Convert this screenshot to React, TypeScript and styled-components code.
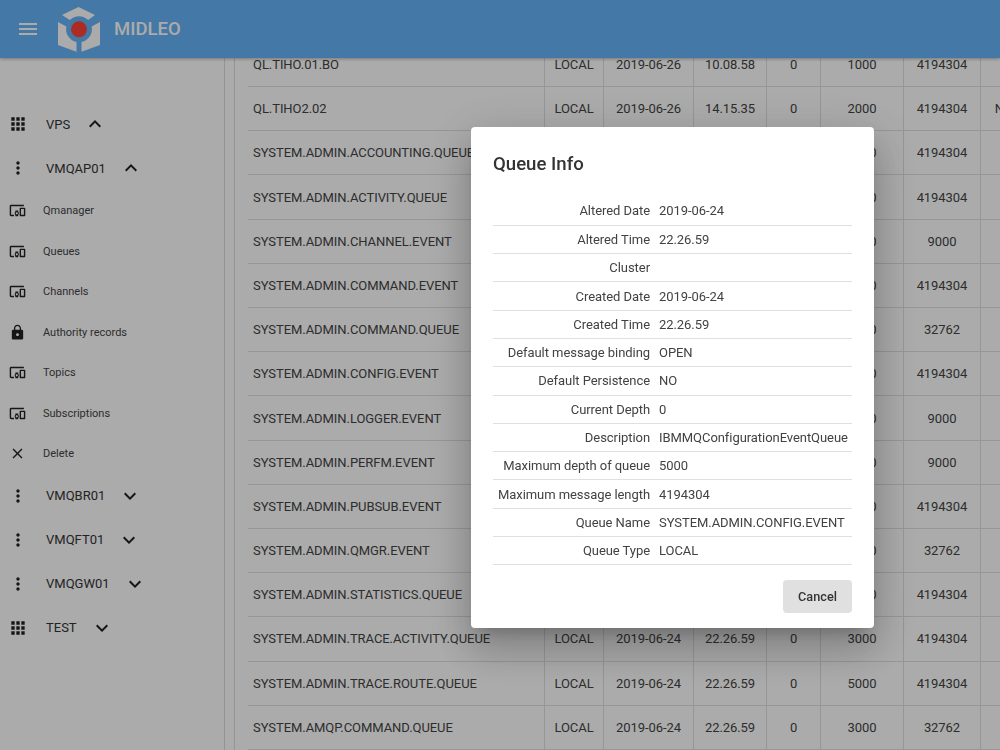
import React from 'react'
import styled, { createGlobalStyle } from 'styled-components'
import { MdApps, MdClose, MdDevicesOther, MdExpandLess, MdExpandMore, MdLock, MdMenu, MdMoreVert } from 'react-icons/md'

const GlobalStyle = createGlobalStyle`
html, body {
  margin: 0;
  height: 100%;
  overflow: hidden;
  background: #fff;
  font-family: Roboto, "Liberation Sans", sans-serif;
}
`

const Page = styled.div`
display: flex;
flex-direction: column;
height: 750px;
overflow: hidden;
`

const Header = styled.header`
flex: 0 0 58px;
display: flex;
align-items: center;
background: #66b3f8;
color: #fff;
box-shadow: 0 1px 3px rgba(0, 0, 0, 0.3);
z-index: 2;
`

const MenuButton = styled.div`
display: flex;
width: 56px;
margin-right: 2px;
justify-content: center;
font-size: 24px;
`

const Brand = styled.div`
margin-left: 14px;
font-size: 18.5px;
font-weight: 500;
`

const LogoMark = styled.svg`
flex: none;
width: 42px;
height: 45px;
margin-top: 1px;
`

const Body = styled.div`
flex: 1;
display: flex;
min-height: 0;
`

const Sidebar = styled.nav`
flex: 0 0 224px;
padding-top: 44.4px;
border-right: 1px solid #ddd;
`

const NodeRow = styled.div`
display: flex;
align-items: center;
height: 44px;
color: #333;
font-size: 13px;
`

const NodeIcon = styled.span`
display: flex;
width: 36px;
justify-content: center;
font-size: 20px;
margin-right: 10px;
color: #222;
`

const Chevron = styled.span`
display: flex;
margin-left: 13px;
font-size: 24px;
color: #222;
`

const SubRow = styled.div`
display: flex;
align-items: center;
height: 40.5px;
color: #444;
font-size: 11px;
`

const SubIcon = styled.span`
display: flex;
width: 35px;
justify-content: center;
font-size: 17px;
margin-right: 8px;
color: #222;
`

const Main = styled.main`
flex: 1;
min-width: 0;
overflow: hidden;
margin-left: 9px;
padding-left: 13px;
border-left: 1px solid #ddd;
`

const Table = styled.table`
table-layout: fixed;
width: 752px;
margin-top: -15.6px;
border-collapse: collapse;
font-size: 13px;
letter-spacing: -0.06px;
color: #444;
`

const Row = styled.tr`
height: 44.2px;
border-bottom: 1px solid #e0e0e0;
`

const NameCell = styled.td`
padding: 0 5px;
white-space: nowrap;
overflow: hidden;
`

const Cell = styled.td`
padding: 0 0 0 1px;
text-align: center;
border-left: 1px solid #e0e0e0;
white-space: nowrap;
overflow: hidden;
`

const Backdrop = styled.div`
position: fixed;
inset: 0;
z-index: 5;
background: rgba(0, 0, 0, 0.33);
`

const Dialog = styled.section`
position: fixed;
z-index: 6;
left: 471px;
top: 127px;
width: 403px;
height: 501px;
box-sizing: border-box;
padding: 0 22px;
background: #fff;
border-radius: 4px;
box-shadow: 0 11px 15px -7px rgba(0, 0, 0, 0.2), 0 24px 38px 3px rgba(0, 0, 0, 0.14), 0 9px 46px 8px rgba(0, 0, 0, 0.12);
display: flex;
flex-direction: column;
`

const Title = styled.h2`
margin: 24px 0 0;
height: 46px;
font-size: 18.6px;
line-height: 26px;
font-weight: 500;
color: #333;
`

const InfoTable = styled.table`
width: 359px;
table-layout: fixed;
border-collapse: collapse;
font-size: 13px;
letter-spacing: -0.06px;
color: #424242;
`

const InfoRow = styled.tr`
height: 28.3px;
border-bottom: 1px solid #e0e0e0;
`

const InfoLabel = styled.td`
width: 157px;
padding: 0 9px 0 0;
text-align: right;
white-space: nowrap;
`

const InfoValue = styled.td`
padding: 0;
white-space: nowrap;
`

const Actions = styled.div`
display: flex;
justify-content: flex-end;
margin-top: 15px;
`

const CancelButton = styled.button`
width: 69px;
height: 33px;
border: 0;
border-radius: 4px;
background: #e0e0e0;
color: #333;
font: 500 12.7px Roboto, "Liberation Sans", sans-serif;
`

const Logo = () => (
  <LogoMark viewBox="0 0 42 45">
    <path d="M20.5 0 37 8 30.2 13A13 13 0 0 0 11.8 13L4 8Z" fill="#fff" />
    <path d="M0 15 8.4 19.5A13 13 0 0 0 18.5 35V44.7L0 38Z" fill="#fff" />
    <path d="M42 15 33.6 19.5A13 13 0 0 1 23.5 35V44.7L42 38Z" fill="#fff" />
    <circle cx="21" cy="22.3" r="8" fill="#ff4236" />
  </LogoMark>
)

const rows: [string, string, string, string, string, string, string?][] = [
  ['QL.TIHO.01.BO', '2019-06-26', '10.08.58', '0', '1000', '4194304'],
  ['QL.TIHO2.02', '2019-06-26', '14.15.35', '0', '2000', '4194304', 'NO'],
  ['SYSTEM.ADMIN.ACCOUNTING.QUEUE', '2019-06-24', '22.26.59', '0', '3000', '4194304'],
  ['SYSTEM.ADMIN.ACTIVITY.QUEUE', '2019-06-24', '22.26.59', '0', '3000', '4194304'],
  ['SYSTEM.ADMIN.CHANNEL.EVENT', '2019-06-24', '22.26.59', '0', '3000', '9000'],
  ['SYSTEM.ADMIN.COMMAND.EVENT', '2019-06-24', '22.26.59', '0', '3000', '4194304'],
  ['SYSTEM.ADMIN.COMMAND.QUEUE', '2019-06-24', '22.26.59', '0', '3000', '32762'],
  ['SYSTEM.ADMIN.CONFIG.EVENT', '2019-06-24', '22.26.59', '0', '5000', '4194304'],
  ['SYSTEM.ADMIN.LOGGER.EVENT', '2019-06-24', '22.26.59', '0', '3000', '9000'],
  ['SYSTEM.ADMIN.PERFM.EVENT', '2019-06-24', '22.26.59', '0', '3000', '9000'],
  ['SYSTEM.ADMIN.PUBSUB.EVENT', '2019-06-24', '22.26.59', '0', '3000', '4194304'],
  ['SYSTEM.ADMIN.QMGR.EVENT', '2019-06-24', '22.26.59', '0', '3000', '32762'],
  ['SYSTEM.ADMIN.STATISTICS.QUEUE', '2019-06-24', '22.26.59', '0', '3000', '4194304'],
  ['SYSTEM.ADMIN.TRACE.ACTIVITY.QUEUE', '2019-06-24', '22.26.59', '0', '3000', '4194304'],
  ['SYSTEM.ADMIN.TRACE.ROUTE.QUEUE', '2019-06-24', '22.26.59', '0', '5000', '4194304'],
  ['SYSTEM.AMQP.COMMAND.QUEUE', '2019-06-24', '22.26.59', '0', '3000', '32762'],
]

const info = [
  ['Altered Date', '2019-06-24'],
  ['Altered Time', '22.26.59'],
  ['Cluster', ''],
  ['Created Date', '2019-06-24'],
  ['Created Time', '22.26.59'],
  ['Default message binding', 'OPEN'],
  ['Default Persistence', 'NO'],
  ['Current Depth', '0'],
  ['Description', 'IBMMQConfigurationEventQueue'],
  ['Maximum depth of queue', '5000'],
  ['Maximum message length', '4194304'],
  ['Queue Name', 'SYSTEM.ADMIN.CONFIG.EVENT'],
  ['Queue Type', 'LOCAL'],
]

const subItems = [
  { label: 'Qmanager', icon: <MdDevicesOther /> },
  { label: 'Queues', icon: <MdDevicesOther /> },
  { label: 'Channels', icon: <MdDevicesOther /> },
  { label: 'Authority records', icon: <MdLock /> },
  { label: 'Topics', icon: <MdDevicesOther /> },
  { label: 'Subscriptions', icon: <MdDevicesOther /> },
  { label: 'Delete', icon: <MdClose /> },
]

const Node = ({ icon, label, open }: { icon: React.ReactNode; label: string; open?: boolean }) => (
  <NodeRow>
    <NodeIcon>{icon}</NodeIcon>
    {label}
    <Chevron>{open ? <MdExpandLess /> : <MdExpandMore />}</Chevron>
  </NodeRow>
)

const App = () => {
  return (
    <Page>
      <GlobalStyle />
      <Header>
        <MenuButton><MdMenu /></MenuButton>
        <Logo />
        <Brand>MIDLEO</Brand>
      </Header>
      <Body>
        <Sidebar>
          <Node icon={<MdApps />} label="VPS" open />
          <Node icon={<MdMoreVert />} label="VMQAP01" open />
          {subItems.map((item) => (
            <SubRow key={item.label}>
              <SubIcon>{item.icon}</SubIcon>
              {item.label}
            </SubRow>
          ))}
          <Node icon={<MdMoreVert />} label="VMQBR01" />
          <Node icon={<MdMoreVert />} label="VMQFT01" />
          <Node icon={<MdMoreVert />} label="VMQGW01" />
          <Node icon={<MdApps />} label="TEST" />
        </Sidebar>
        <Main>
          <Table>
            <colgroup>
              <col width="296" />
              <col width="59" />
              <col width="90" />
              <col width="73" />
              <col width="54" />
              <col width="83" />
              <col width="77" />
              <col width="46" />
            </colgroup>
            <tbody>
              {rows.map((row) => (
                <Row key={row[0]}>
                  <NameCell>{row[0]}</NameCell>
                  <Cell>LOCAL</Cell>
                  <Cell>{row[1]}</Cell>
                  <Cell>{row[2]}</Cell>
                  <Cell>{row[3]}</Cell>
                  <Cell>{row[4]}</Cell>
                  <Cell>{row[5]}</Cell>
                  <Cell>{row[6]}</Cell>
                </Row>
              ))}
            </tbody>
          </Table>
        </Main>
      </Body>
      <Backdrop />
      <Dialog>
        <Title>Queue Info</Title>
        <InfoTable>
          <tbody>
            {info.map(([label, value]) => (
              <InfoRow key={label}>
                <InfoLabel>{label}</InfoLabel>
                <InfoValue>{value}</InfoValue>
              </InfoRow>
            ))}
          </tbody>
        </InfoTable>
        <Actions>
          <CancelButton>Cancel</CancelButton>
        </Actions>
      </Dialog>
    </Page>
  )
}

export default App
